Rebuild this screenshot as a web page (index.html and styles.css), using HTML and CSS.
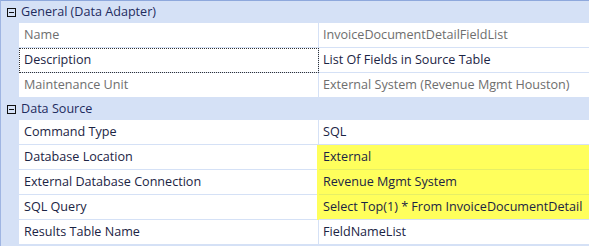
FILE: index.html
```html
<!DOCTYPE html>
<html lang="en">
<head>
    <meta charset="UTF-8">
    <title>Data Adapter Properties</title>
    <link rel="stylesheet" href="styles.css">
</head>
<body>
    <div class="grid">
        <div class="category"><span class="toggle"></span>General (Data Adapter)</div>
        <div class="row readonly">
            <div class="name">Name</div>
            <div class="value">InvoiceDocumentDetailFieldList</div>
        </div>
        <div class="row">
            <div class="name focused">Description</div>
            <div class="value">List Of Fields in Source Table</div>
        </div>
        <div class="row readonly">
            <div class="name">Maintenance Unit</div>
            <div class="value">External System (Revenue Mgmt Houston)</div>
        </div>

        <div class="category"><span class="toggle"></span>Data Source</div>
        <div class="row">
            <div class="name">Command Type</div>
            <div class="value">SQL</div>
        </div>
        <div class="row marked">
            <div class="name">Database Location</div>
            <div class="value">External</div>
        </div>
        <div class="row marked">
            <div class="name">External Database Connection</div>
            <div class="value">Revenue Mgmt System</div>
        </div>
        <div class="row marked last-mark">
            <div class="name">SQL Query</div>
            <div class="value">Select Top(1) * From InvoiceDocumentDetail</div>
        </div>
        <div class="row">
            <div class="name">Results Table Name</div>
            <div class="value">FieldNameList</div>
        </div>
    </div>
</body>
</html>
```

FILE: styles.css
```css
body {
    margin: 0;
    font-family: "Open Sans", "Noto Sans", sans-serif;
    font-size: 12.6px;
}
.grid {
    width: 589px;
    height: 246px;
    box-sizing: border-box;
    background-color: #d5e1f6;
    border-top: 1px solid #8ea8dc;
    border-left: 1px solid #9fb5e2;
    overflow: hidden;
}
.category {
    height: 22px;
    line-height: 22px;
    display: flex;
    align-items: center;
    color: #1f2c5e;
}
.toggle {
    width: 9px;
    height: 9px;
    box-sizing: border-box;
    border: 1px solid #111;
    margin: 0 5px 0 6px;
    display: flex;
    align-items: center;
    justify-content: center;
}
.toggle::after {
    content: "";
    width: 5px;
    height: 1px;
    background-color: #111;
}
.row {
    display: flex;
    margin-left: 18px;
    height: 25px;
    line-height: 24px;
    color: #1b2444;
}
.name, .value {
    box-sizing: border-box;
    border-bottom: 1px solid #d5e1f6;
    background-color: #fff;
    white-space: nowrap;
    overflow: hidden;
}
.name {
    width: 300px;
    padding-left: 5px;
    border-right: 1px solid #d5e1f6;
}
.value {
    flex: 1;
    padding-left: 4px;
}
.readonly { color: #6e6e6e; }
.name.focused {
    outline: 1px dotted #333;
    outline-offset: -1px;
}
.marked .value {
    background-color: #ffff5c;
    border-bottom-color: #e6ef66;
    box-shadow: -2px 0 0 #ffff5c;
}
.last-mark .value {
    border-bottom-color: #d5e1f6;
}
```
